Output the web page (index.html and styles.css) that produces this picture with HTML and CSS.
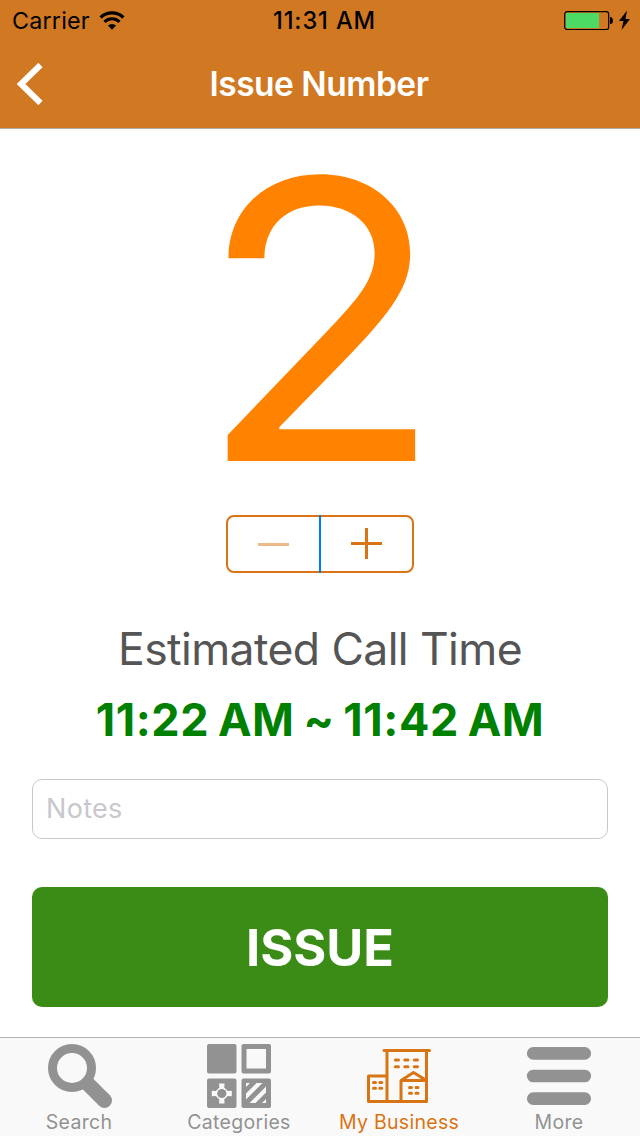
FILE: index.html
```html
<!DOCTYPE html>
<html lang="en">
<head>
<meta charset="utf-8">
<title>Issue Number</title>
<link rel="stylesheet" href="styles.css">
</head>
<body>
<div class="screen">
  <header class="header">
    <div class="status">
      <div class="status-left">
        <span class="carrier">Carrier</span>
        <svg class="wifi" width="26" height="20" viewBox="0 0 26 20">
          <g fill="none" stroke="#000" stroke-width="3.2">
            <path d="M1.6 6.500 A16.500 16.500 0 0 1 24.4 6.500"/>
            <path d="M5.5 10.800 A10.8 10.8 0 0 1 20.5 10.800"/>
          </g>
          <path d="M13 18.800 L8.9 14.500 A6 6 0 0 1 17.1 14.500 Z"/>
        </svg>
      </div>
      <span class="clock">11:31 AM</span>
      <div class="status-right">
        <svg width="68" height="22" viewBox="0 0 68 22">
          <rect x="0.7" y="1.7" width="44" height="17.8" rx="2.6" fill="none" stroke="#000" stroke-width="1.2"/>
          <rect x="2" y="3" width="33" height="15" fill="#4cd964"/>
          <path d="M46 7 h1 q2 1 2 3.5 t-2 3.5 h-1 z"/>
          <path d="M63 0.5 L55 11 h4.5 L57.500 20 L66 9 h-4.500 z"/>
        </svg>
      </div>
    </div>
    <div class="nav">
      <svg class="back" width="28" height="44" viewBox="0 0 28 44">
        <path d="M24.500 3 L5 22 L24.500 41" fill="none" stroke="#fff" stroke-width="6"/>
      </svg>
      <h1 class="title">Issue Number</h1>
    </div>
  </header>

  <main class="content">
    <div class="number"><span class="digit">2</span></div>
    <div class="stepper">
      <div class="step">
        <svg width="31" height="31" viewBox="0 0 31 31"><path d="M0 15h31v3H0z" fill="#d97414" opacity=".5"/></svg>
      </div>
      <div class="divider"></div>
      <div class="step">
        <svg width="31" height="31" viewBox="0 0 31 31"><path d="M0 14h31v3H0zM14 0h3v31h-3z" fill="#d97414"/></svg>
      </div>
    </div>
    <p class="label">Estimated Call Time</p>
    <p class="time">11:22 AM ~ 11:42 AM</p>
    <div class="notes">Notes</div>
    <div class="issue">ISSUE</div>
  </main>

  <nav class="tabs">
    <div class="tab">
      <svg width="66" height="66" viewBox="0 0 66 66">
        <circle cx="26" cy="25" r="19.500" fill="none" stroke="#929292" stroke-width="9"/>
        <path d="M40 39 L58.500 57.500" stroke="#929292" stroke-width="15"/>
        <circle cx="58.500" cy="57.500" r="7.500" fill="#929292"/>
      </svg>
      <span class="tab-text">Search</span>
    </div>
    <div class="tab">
      <svg width="66" height="66" viewBox="0 0 66 66">
        <g fill="#929292">
          <rect x="1" y="1" width="29.500" height="29.500" rx="2"/>
          <path fill-rule="evenodd" d="M37.500 1 h25.500 q2 0 2 2 v25.500 q0 2 -2 2 h-25.500 q-2 0 -2 -2 v-25.500 q0 -2 2 -2z M40.500 6 v19.500 h19.500 v-19.500z"/>
          <rect x="1" y="35.500" width="29.500" height="29.500" rx="2"/>
          <rect x="35.500" y="35.500" width="29.500" height="29.500" rx="2"/>
        </g>
        <g fill="#f9f9f9">
          <path d="M13 40.500 h5.600 l-.4 4 l3.600 3.600 l4 -.4 v5.600 l-4 -.4 l-3.600 3.600 l.4 4 h-5.600 l.4 -4 l-3.600 -3.600 l-4 .4 v-5.600 l4 .4 l3.600 -3.600z"/>
          <path d="M40 40 h4 l-4 4z M60 60 h-4 l4 -4z M50.500 40 h6 L40 56.500 v-6z M60 43.500 v6 L49.500 60 h-6z"/>
        </g>
        <circle cx="15.800" cy="50.500" r="4.600" fill="#929292"/>
      </svg>
      <span class="tab-text">Categories</span>
    </div>
    <div class="tab active">
      <svg width="66" height="66" viewBox="0 0 66 66">
        <g fill="none" stroke="#d97414" stroke-width="3" stroke-linejoin="round">
          <path d="M18 7.500 H63.500" stroke-linecap="round"/>
          <path d="M21 7.500 V58.500 M60.500 7.500 V58.500 H2.500 V33 H21"/>
          <path d="M35 58.500 V37.500 H60.500 M35 37.500 L47.500 29.500 L60.500 37.500"/>
        </g>
        <g stroke="#d97414" stroke-width="3" stroke-linecap="round">
          <path d="M29.300 17 h3.200 M38.800 17 h3.200 M48.300 17 h3.200 M29.300 23.800 h3.200 M38.800 23.800 h3.200 M48.300 23.800 h3.200"/>
          <path d="M7.500 39.500 h2 M13.800 39.500 h2 M7.500 45.200 h2 M13.800 45.200 h2 M43.500 44.500 h2 M50 44.500 h2 M43.500 50.300 h2 M50 50.300 h2"/>
        </g>
      </svg>
      <span class="tab-text">My Business</span>
    </div>
    <div class="tab">
      <svg width="66" height="66" viewBox="0 0 66 66">
        <path d="M7.200 10.400 H58.800 M7.200 33 H58.800 M7.200 55.600 H58.800" stroke="#929292" stroke-width="12.600" stroke-linecap="round"/>
      </svg>
      <span class="tab-text">More</span>
    </div>
  </nav>
</div>
</body>
</html>
```
FILE: styles.css
```css
* { box-sizing: border-box; }
body { margin: 0; background: #fff; font-family: Inter, "Liberation Sans", sans-serif; }
h1, p { margin: 0; font-weight: inherit; }
svg { display: block; flex: none; }
.screen { width: 640px; height: 1136px; display: flex; flex-direction: column; overflow: hidden; white-space: nowrap; }

.header { height: 129px; background: #d17823; border-bottom: 1px solid #b2aca5; }
.status { height: 40px; padding: 1px 8px 0 12px; display: grid; grid-template-columns: 1fr auto 1fr; align-items: center; font-size: 23.3px; line-height: 38px; color: #000; }
.status-left { display: flex; align-items: center; gap: 9px; }
.carrier { letter-spacing: 0.2px; }
.clock { font-weight: 500; font-size: 23.6px; letter-spacing: 0.9px; margin-left: 5px; }
.status-right { display: flex; justify-content: flex-end; }
.nav { height: 88px; padding-left: 15.500px; display: grid; grid-template-columns: 28px 1fr 45.500px; align-items: center; }
.back { margin-bottom: 1px; }
.title { text-align: center; color: #fff; font-size: 33.5px; font-weight: 600; line-height: 88px; letter-spacing: -0.5px; }

.content { height: 908px; padding: 0 32px; display: flex; flex-direction: column; }
.number { height: 377px; line-height: 381px; padding-left: 1px; text-align: center; font-size: 389px; color: #ff8200; }
.digit { display: inline-block; transform: scaleX(1.04); }
.stepper { width: 188px; height: 58px; margin: 9px auto 0; border: 2px solid #d97414; border-radius: 8px; display: flex; }
.step { flex: 1; display: flex; align-items: center; justify-content: center; padding-bottom: 2px; }
.divider { width: 2px; margin: -2px 0; background: #007aff; }
.label { height: 70px; margin-top: 41px; line-height: 70px; text-align: center; font-size: 44.5px; font-weight: 400; letter-spacing: -0.6px; color: #555; }
.time { height: 70px; line-height: 70px; margin-top: 1px; text-align: center; font-size: 45px; font-weight: 700; letter-spacing: 0.6px; word-spacing: -2.5px; color: #008000; }
.notes { height: 60px; margin-top: 24px; border: 1px solid #c8c8c8; border-radius: 10px; padding-left: 13px; font-size: 27px; line-height: 57px; letter-spacing: 0.3px; color: #c7c7cd; }
.issue { height: 120px; margin-top: 48px; border-radius: 10px; background: #3b8c17; color: #fff; text-align: center; font-size: 50.5px; font-weight: 700; line-height: 122px; }

.tabs { height: 99px; border-top: 1px solid #b0b0b0; background: #f9f9f9; display: grid; grid-template-columns: repeat(4, 160px); color: #929292; }
.tab { padding: 5px 2px 0 0; display: flex; flex-direction: column; align-items: center; font-size: 19.5px; line-height: 24px; }
.tab-text { margin-top: 1px; letter-spacing: 0.3px; }
.active { color: #d97414; }
```
